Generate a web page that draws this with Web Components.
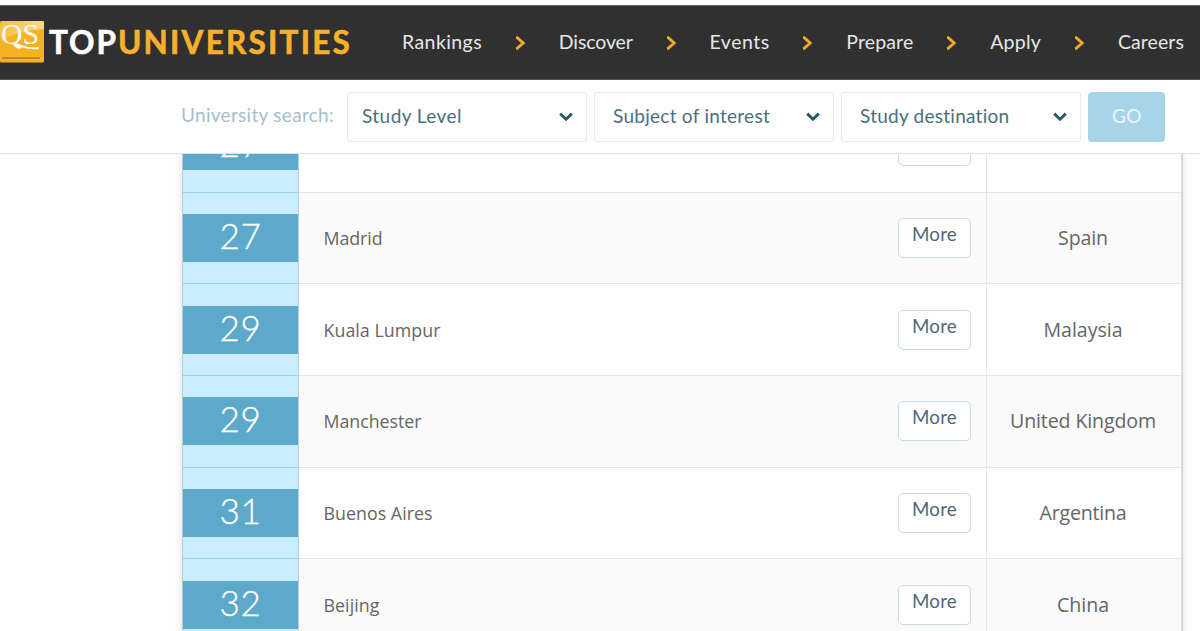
<!DOCTYPE html>
<html lang="en">
<head>
<meta charset="utf-8">
<title>QS Top Universities</title>
<style>
  html, body { margin: 0; height: 100%; overflow: hidden; }
  body {
    display: flex;
    flex-direction: column;
    background: #fefefe;
    font-family: Lato, "Liberation Sans", sans-serif;
  }
</style>
</head>
<body>
<site-header></site-header>
<search-bar></search-bar>
<rankings-table></rankings-table>

<script>
/** Create a template element from markup. */
function html(markup) {
  const template = document.createElement('template');
  template.innerHTML = markup;
  return template;
}

class BaseElement extends HTMLElement {
  constructor() {
    super();
    this.attachShadow({ mode: 'open' });
    this.shadowRoot.appendChild(this.constructor.template.content.cloneNode(true));
  }
}

/**
 * One line of text, tracked so that it fills the `width` attribute.
 */
class TrackedText extends BaseElement {
  static template = html(`
    <style>
      :host { display: inline-block; white-space: nowrap; flex: none; }
    </style>
    <slot></slot>
  `);

  connectedCallback() {
    const target = Number(this.getAttribute('width'));
    if (!target) return;
    const natural = this.getBoundingClientRect().width;
    const count = this.textContent.length;
    this.style.letterSpacing = ((target - natural) / count).toFixed(3) + 'px';
    this.style.width = target + 'px';
  }
}
customElements.define('tracked-text', TrackedText);

class ChevronIcon extends BaseElement {
  static template = html(`
    <style>
      :host { display: block; flex: none; width: 11px; height: 14px; }
      :host([down]) { width: 14px; height: 10px; }
      svg { display: none; fill: none; stroke: currentColor; stroke-width: 2.9; }
      :host([down]) .down, :host(:not([down])) .right { display: block; }
    </style>
    <svg class="right" width="11" height="14" viewBox="0 0 11 14"><path d="M1 1.6h1.2L8.2 7l-6 5.4H1"/></svg>
    <svg class="down" width="14" height="10" viewBox="0 0 14 10"><path d="M1.2 1.6 7 7.2l5.8-5.6"/></svg>
  `);
}
customElements.define('chevron-icon', ChevronIcon);

class SiteLogo extends BaseElement {
  static template = html(`
    <style>
      :host { display: flex; align-items: center; flex: none; }
      svg { display: block; }
      .word {
        display: flex;
        margin-left: 5px;
        font-size: 31.5px;
        line-height: 40px;
        font-weight: 700;
        color: #fff;
        -webkit-text-stroke: 0.6px currentColor;
        paint-order: stroke;
      }
      .word :last-child { color: #f6b12c; }
    </style>
    <svg width="44" height="42" viewBox="0 0 44 42">
      <defs>
        <linearGradient id="shine" x1="0" y1="0" x2="1" y2="0">
          <stop offset="0" stop-color="#fff" stop-opacity="0.15"/>
          <stop offset="1" stop-color="#fff" stop-opacity="0.5"/>
        </linearGradient>
      </defs>
      <rect width="44" height="41.5" rx="1.5" fill="#f8b122"/>
      <path d="M0 0h44v8C28 9 14 12 0 20z" fill="url(#shine)"/>
      <text x="1" y="23" font-family="Liberation Serif, serif" font-size="29" fill="#fff" textLength="38" lengthAdjust="spacingAndGlyphs">QS</text>
      <path d="M14 23c8 1 13 6 25 4" fill="none" stroke="#fff" stroke-width="1.8"/>
      <path d="M2 37h38" stroke="#b88c35" stroke-width="2"/>
    </svg>
    <div class="word"><tracked-text width="69">TOP</tracked-text><tracked-text width="234">UNIVERSITIES</tracked-text></div>
  `);
}
customElements.define('site-logo', SiteLogo);

class SiteHeader extends BaseElement {
  static template = html(`
    <style>
      :host {
        display: flex;
        align-items: center;
        flex: none;
        box-sizing: border-box;
        height: 75px;
        margin-top: 5px;
        padding-bottom: 1px;
        background: #303030;
        border-top: 1px solid #626262;
        border-bottom: 1px solid #555;
      }
      nav {
        display: flex;
        align-items: center;
        justify-content: space-between;
        width: 782px;
        margin-left: 50px;
        font-size: 19.5px;
        line-height: 24px;
        color: #e6e6e6;
      }
      chevron-icon { color: #efa92f; margin-top: 2px; }
    </style>
    <site-logo></site-logo>
    <nav>
      <tracked-text width="80">Rankings</tracked-text><chevron-icon></chevron-icon>
      <tracked-text width="74">Discover</tracked-text><chevron-icon></chevron-icon>
      <tracked-text width="60">Events</tracked-text><chevron-icon></chevron-icon>
      <tracked-text width="67">Prepare</tracked-text><chevron-icon></chevron-icon>
      <tracked-text width="51">Apply</tracked-text><chevron-icon></chevron-icon>
      <tracked-text width="66">Careers</tracked-text>
    </nav>
  `);
}
customElements.define('site-header', SiteHeader);

class SelectBox extends BaseElement {
  static template = html(`
    <style>
      :host {
        display: flex;
        align-items: center;
        justify-content: space-between;
        box-sizing: border-box;
        width: 240px;
        height: 50px;
        padding: 0 13px 0 var(--inset, 18px);
        border: 1px solid #e9e9e9;
        border-radius: 3px;
        color: #4b707d;
        font-size: 19px;
        line-height: 24px;
      }
      ::slotted(*) { margin-bottom: 2px; }
      chevron-icon { color: #2a5866; }
    </style>
    <slot></slot>
    <chevron-icon down></chevron-icon>
  `);
}
customElements.define('select-box', SelectBox);

class SearchBar extends BaseElement {
  static template = html(`
    <style>
      :host {
        display: flex;
        flex: none;
        gap: 7px;
        box-sizing: border-box;
        height: 74px;
        padding: 12px 0 0 181px;
        border-bottom: 1px solid #d5e6ed;
      }
      .label {
        margin: 11px 6px 0 0;
        font-size: 19px;
        line-height: 24px;
        color: #a8bfc7;
      }
      button {
        width: 77px;
        height: 50px;
        padding: 0 0 2px 1px;
        border: 0;
        border-radius: 4px;
        background: #a8d4e7;
        color: #e9f6fb;
        font: 19px/24px Lato, sans-serif;
      }
    </style>
    <tracked-text class="label" width="153">University search:</tracked-text>
    <select-box style="--inset: 14px"><tracked-text width="100">Study Level</tracked-text></select-box>
    <select-box><tracked-text width="157">Subject of interest</tracked-text></select-box>
    <select-box><tracked-text width="150">Study destination</tracked-text></select-box>
    <button><tracked-text width="30">GO</tracked-text></button>
  `);
}
customElements.define('search-bar', SearchBar);

class RankingRow extends BaseElement {
  static template = html(`
    <style>
      :host {
        display: grid;
        grid-template-columns: 116px 688px 1fr;
        box-sizing: border-box;
        height: 91.7px;
        background: #fefefe;
        color: #666;
        font-family: "Open Sans", "Noto Sans", sans-serif;
      }
      :host(:nth-child(even)) { background: #fafafa; }
      .rank, .city, .country {
        display: flex;
        align-items: center;
        box-sizing: border-box;
        border-bottom: 1px solid #e6e6e6;
      }
      .rank {
        background: #c8edfe;
        border-bottom-color: #99cfe6;
        border-right: 1px solid #b0d3e1;
      }
      .badge {
        flex: 1;
        height: 48px;
        background: #5ca9ca;
        color: #fff;
        font: 300 35px/43px Lato, sans-serif;
        -webkit-text-stroke: 0.3px currentColor;
        text-align: center;
      }
      .city {
        justify-content: space-between;
        padding: 0 15px 0 24.5px;
        border-right: 1px solid #e6e6e6;
        font-size: 17.8px;
      }
      button {
        width: 73px;
        height: 40px;
        padding: 0 0 8px;
        border: 1px solid #c9dce4;
        border-radius: 5px;
        background: #fefefe;
        color: #4f6973;
        font: 18.8px/24px Lato, sans-serif;
      }
      .country { justify-content: center; padding: 0 2px 1px 0; font-size: 19.6px; }
    </style>
    <div class="rank"><div class="badge"></div></div>
    <div class="city"><button></button></div>
    <div class="country"></div>
  `);

  connectedCallback() {
    const root = this.shadowRoot;
    const city = this.getAttribute('city');
    root.querySelector('.badge').replaceChildren(this._text(this.getAttribute('rank'), 42));
    root.querySelector('.city').prepend(this._text(city, this.getAttribute('city-width')));
    root.querySelector('button').replaceChildren(this._text(city ? 'More' : '', city ? 45 : 0));
    root.querySelector('.country').replaceChildren(
      this._text(this.getAttribute('country'), this.getAttribute('country-width')));
  }

  _text(value, width) {
    const el = document.createElement('tracked-text');
    el.textContent = value || '';
    el.setAttribute('width', width || 0);
    return el;
  }
}
customElements.define('ranking-row', RankingRow);

const RANKINGS = [
  { rank: '27' },
  { rank: '27', city: 'Madrid', cityWidth: 59, country: 'Spain', countryWidth: 50 },
  { rank: '29', city: 'Kuala Lumpur', cityWidth: 117, country: 'Malaysia', countryWidth: 79 },
  { rank: '29', city: 'Manchester', cityWidth: 98, country: 'United Kingdom', countryWidth: 146 },
  { rank: '31', city: 'Buenos Aires', cityWidth: 109, country: 'Argentina', countryWidth: 87 },
  { rank: '32', city: 'Beijing', cityWidth: 56, country: 'China', countryWidth: 52 },
];

class RankingsTable extends BaseElement {
  static template = html(`
    <style>
      :host { display: block; flex: 1; min-height: 0; overflow: hidden; }
      /* scrolled part way into the first row */
      .rows {
        width: 998px;
        margin: -53.2px 0 0 182px;
        border-left: 1px solid #b9cdd5;
        border-right: 2px solid #d9d9d9;
        box-shadow: 0 0 7px rgba(0, 0, 0, 0.13);
      }
    </style>
    <div class="rows"></div>
  `);

  connectedCallback() {
    const rows = this.shadowRoot.querySelector('.rows');
    for (const item of RANKINGS) {
      const row = document.createElement('ranking-row');
      row.setAttribute('rank', item.rank);
      row.setAttribute('city', item.city || '');
      row.setAttribute('city-width', item.cityWidth || 0);
      row.setAttribute('country', item.country || '');
      row.setAttribute('country-width', item.countryWidth || 0);
      rows.appendChild(row);
    }
  }
}
customElements.define('rankings-table', RankingsTable);
</script>
</body>
</html>
